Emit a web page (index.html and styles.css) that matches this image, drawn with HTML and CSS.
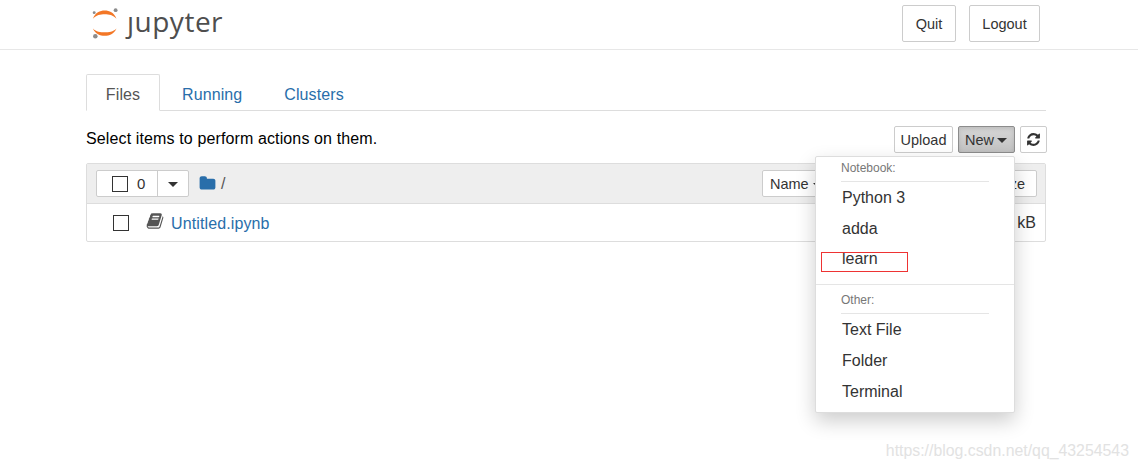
FILE: index.html
```html
<!DOCTYPE html>
<html lang="en">
<head>
<meta charset="utf-8">
<title>Home</title>
<link rel="stylesheet" href="styles.css">
</head>
<body>
<header class="topbar">
  <div class="brand">
    <svg class="brand-mark" viewBox="0 0 32 36" aria-hidden="true">
      <path class="arc" d="M1 12C4 4.500 9 2.500 14.500 2.500S25 4.500 28 12C24 7.500 19.500 6.800 14.500 6.800S5 7.500 1 12Z"/>
      <path class="arc" d="M1 23C4 29.500 9 31.500 14.500 31.500S25 29.500 28 23C24 27 19.500 27.500 14.500 27.500S5 27 1 23Z"/>
      <circle class="dot" cx="27" cy="2.200" r="2.200"/>
      <circle class="dot" cx="2.500" cy="5" r="1.700"/>
      <circle class="dot" cx="3.800" cy="32" r="2.600"/>
    </svg>
    <span class="brand-name">ȷupyter</span>
  </div>
  <div class="top-actions">
    <a class="btn top-btn quit">Quit</a>
    <a class="btn top-btn logout">Logout</a>
  </div>
</header>

<main class="page">
  <nav class="tabs">
    <a class="tab active">Files</a>
    <a class="tab">Running</a>
    <a class="tab">Clusters</a>
  </nav>

  <div class="toolbar">
    <span class="hint">Select items to perform actions on them.</span>
    <div class="tools">
      <a class="btn small">Upload</a>
      <a class="btn small new-btn">New <i class="caret"></i></a>
      <a class="btn small icon-btn">
        <svg class="refresh" viewBox="0 0 1792 1792" aria-hidden="true"><path d="M1639 1056q0 5-1 7-64 268-268 434.500t-478 166.500q-146 0-282.500-55t-243.500-157l-129 129q-19 19-45 19t-45-19-19-45v-448q0-26 19-45t45-19h448q26 0 45 19t19 45-19 45l-137 137q71 66 161 102t187 36q134 0 250-65t186-179q11-17 53-117 8-23 30-23h192q13 0 22.500 9.500t9.500 22.500zm25-800v448q0 26-19 45t-45 19h-448q-26 0-45-19t-19-45 19-45l138-138q-148-137-349-137-134 0-250 65t-186 179q-11 17-53 117-8 23-30 23h-199q-13 0-22.500-9.500t-9.500-22.500v-7q65-268 270-434.500t480-166.500q146 0 284 55.500t245 156.500l130-129q19-19 45-19t45 19 19 45z"/></svg>
      </a>
      <div class="menu">
        <div class="menu-head">Notebook:</div>
        <a class="menu-item">Python 3</a>
        <a class="menu-item">adda</a>
        <a class="menu-item learn">learn</a>
        <div class="menu-sep"></div>
        <div class="menu-head">Other:</div>
        <a class="menu-item">Text File</a>
        <a class="menu-item">Folder</a>
        <a class="menu-item">Terminal</a>
        <div class="mark"></div>
      </div>
    </div>
  </div>

  <section class="list">
    <div class="list-head">
      <div class="select-group">
        <label class="select-main"><span class="box"></span><span class="count">0</span></label>
        <span class="select-drop"><i class="caret dark"></i></span>
      </div>
      <svg class="folder" viewBox="0 0 1792 1792" aria-hidden="true"><path d="M1728 608v704q0 92-66 158t-158 66h-1216q-92 0-158-66t-66-158v-960q0-92 66-158t158-66h320q92 0 158 66t66 158v32h672q92 0 158 66t66 158z"/></svg>
      <span class="crumb">/</span>
      <div class="sorts">
        <a class="sort name">Name <i class="caret"></i></a>
        <span class="sort modified"></span>
        <a class="sort size">File size</a>
      </div>
    </div>
    <div class="list-row">
      <span class="box row-box"></span>
      <svg class="book" viewBox="0 0 1792 1792" aria-hidden="true"><path d="M1703 478q40 57 18 129l-275 906q-19 64-76.500 107.500t-122.500 43.500h-923q-77 0-148.500-53.500t-99.500-131.500q-24-67-2-127 0-4 3-27t4-37q1-8-3-21.500t-3-19.500q2-11 8-21t16.500-23.500 16.500-23.500q23-38 45-91.500t30-91.500q3-10 .5-30t-.5-28q3-11 17-28t17-23q21-36 42-92t25-90q1-9-2.500-32t.5-28q4-13 22-30.500t22-22.500q19-26 42.500-84.500t27.500-96.500q1-8-3-25.500t-2-26.500q2-8 9-18t18-23 17-21q8-12 16.500-30.500t15-35 16-36 19.500-32 26.500-23.500 36-11.500 47.500 5.500l-1 3q38-9 51-9h761q74 0 114 56t18 130l-274 906q-36 119-71.500 153.500t-128.500 34.500h-869q-27 0-38 15-11 16-1 43 24 70 144 70h923q29 0 56-15.500t35-41.500l300-987q7-22 5-57 38 15 59 43zm-1064 2q-4 13 2 22.500t20 9.500h608q13 0 25.500-9.500t16.500-22.500l21-64q4-13-2-22.500t-20-9.500h-608q-13 0-25.500 9.500t-16.500 22.500zm-83 256q-4 13 2 22.500t20 9.500h608q13 0 25.500-9.500t16.500-22.500l21-64q4-13-2-22.500t-20-9.500h-608q-13 0-25.500 9.500t-16.500 22.500z"/></svg>
      <a class="file-link">Untitled.ipynb</a>
      <span class="file-size">2 kB</span>
    </div>
  </section>
</main>
<div class="watermark">https://blog.csdn.net/qq_43254543</div>
</body>
</html>
```
FILE: styles.css
```css
* { box-sizing: border-box; }
html, body { margin: 0; height: 100%; }
body {
  font-family: "Liberation Sans", Arial, sans-serif;
  font-size: 16px;
  color: #333;
  background: #fff;
  overflow: hidden;
  position: relative;
}
a { color: inherit; text-decoration: none; }

.topbar {
  height: 50px;
  border-bottom: 1px solid #e7e7e7;
  display: flex;
  align-items: flex-start;
  padding-left: 92px;
}
.brand { display: flex; align-items: center; height: 46px; width: 133px; }
.brand-mark { width: 28px; height: 32px; margin-top: 2px; flex: none; }
.arc { fill: #f37726; }
.dot { fill: #8c8c8c; }
.brand-name {
  font-family: "Open Sans", sans-serif;
  font-size: 28px;
  color: #4e4e4e;
  margin-left: 7px;
  letter-spacing: .5px;
  line-height: 42px;
  height: 46px;
}
.top-actions { display: flex; gap: 13px; margin-left: 677px; padding-top: 5px; }

.btn {
  display: flex;
  align-items: center;
  justify-content: center;
  border: 1px solid #ccc;
  border-radius: 2px;
  background: #fff;
  color: #333;
}
.top-btn { height: 37px; font-size: 14.500px; }
.quit { width: 54px; }
.logout { width: 71px; }

.page { width: 960px; margin-left: 86px; }

.tabs {
  display: flex;
  margin-top: 24px;
  height: 37px;
  border-bottom: 1px solid #ddd;
}
.tab {
  height: 37px;
  padding: 0 20px;
  line-height: 40px;
  color: #296eaa;
  border: 1px solid transparent;
  border-radius: 2px 2px 0 0;
  letter-spacing: .1px;
}
.tab.active {
  width: 74px;
  padding: 0;
  margin-right: 1px;
  text-align: center;
  color: #555;
  background: #fff;
  border-color: #ddd #ddd #fff;
}

.toolbar {
  height: 52px;
  display: flex;
  justify-content: space-between;
  align-items: flex-start;
  padding-top: 15px;
  width: 961px;
}
.hint { color: #000; line-height: 26px; letter-spacing: .125px; }
.tools { display: flex; gap: 5px; position: relative; }
.small { height: 27px; font-size: 14.500px; }
.tools .btn:nth-child(1) { width: 59px; }
.new-btn {
  width: 57px;
  gap: 3px;
  padding-right: 1px;
  background: linear-gradient(#d6d6d6, #c2c2c2);
  border-color: #8c8c8c;
  box-shadow: inset 0 2px 4px rgba(0, 0, 0, .12);
}
.icon-btn { width: 27px; }
.refresh { width: 15px; height: 15px; fill: #333; }
.caret {
  display: inline-block;
  width: 0;
  height: 0;
  border-top: 5px solid #333;
  border-left: 5px solid transparent;
  border-right: 5px solid transparent;
  margin-top: 2px;
}
.sort .caret { border-top-width: 4px; border-left-width: 4px; border-right-width: 4px; }

.menu {
  position: absolute;
  z-index: 5;
  top: 30px;
  left: -79px;
  width: 200px;
  height: 257px;
  background: #fff;
  border: 1px solid #ddd;
  border-radius: 2px;
  box-shadow: 0 8px 20px rgba(0, 0, 0, .2);
  padding-top: 4px;
}
.menu-head {
  font-size: 12px;
  line-height: 14px;
  color: #777;
  margin: 0 25px;
  padding-bottom: 7px;
  border-bottom: 1px solid #e5e5e5;
  height: 21px;
}
.menu-item {
  display: block;
  height: 31px;
  line-height: 31px;
  padding-left: 26px;
  color: #333;
}
.learn { line-height: 29px; }
.menu-sep { height: 1px; background: #e5e5e5; margin: 9px 0 8px; }
.mark {
  position: absolute;
  left: 5px;
  top: 95px;
  width: 87px;
  height: 20px;
  border: 1px solid #e33;
}

.list {
  border: 1px solid #ddd;
  border-radius: 2px;
  height: 79px;
}
.list-head {
  height: 40px;
  background: #eee;
  border-bottom: 1px solid #ddd;
  display: flex;
  align-items: center;
  padding-left: 9px;
}
.select-group {
  display: flex;
  width: 93px;
  height: 27px;
  background: #fff;
  border: 1px solid #ccc;
  border-radius: 2px;
}
.select-main {
  width: 61px;
  display: flex;
  align-items: center;
  padding-left: 15px;
  border-right: 1px solid #ccc;
  font-size: 15px;
}
.box {
  display: block;
  width: 16px;
  height: 16px;
  border: 1px solid #333;
  background: #fff;
  flex: none;
}
.count { margin-left: 9px; }
.select-drop { flex: 1; display: flex; align-items: center; justify-content: center; }
.folder { width: 17px; height: 17px; fill: #296eaa; margin-left: 10px; }
.crumb { margin-left: 5px; color: #555; }
.sorts {
  margin-left: auto;
  margin-right: 8px;
  display: flex;
  width: 275px;
  height: 27px;
  background: #fff;
  border: 1px solid #ccc;
  border-radius: 2px;
  font-size: 14.500px;
  align-items: center;
}
.sort { display: flex; align-items: center; gap: 4px; height: 100%; }
.name { width: 58px; padding-left: 7px; flex: none; }
.modified { flex: 1; }
.size { width: 76px; padding-left: 12px; flex: none; }

.list-row {
  height: 38px;
  display: flex;
  align-items: center;
  padding-left: 26px;
}
.row-box { width: 16px; height: 16px; border-color: #333; }
.book { width: 18px; height: 18px; fill: #555; margin-left: 17px; margin-top: -4px; }
.file-link { margin-left: 7px; color: #296eaa; padding-top: 2px; letter-spacing: .12px; }
.file-size { margin-left: auto; margin-right: 9px; color: #333; }

.watermark {
  position: absolute;
  right: 9px;
  bottom: 9px;
  font-size: 15.850px;
  color: #e2e2e2;
}
```
